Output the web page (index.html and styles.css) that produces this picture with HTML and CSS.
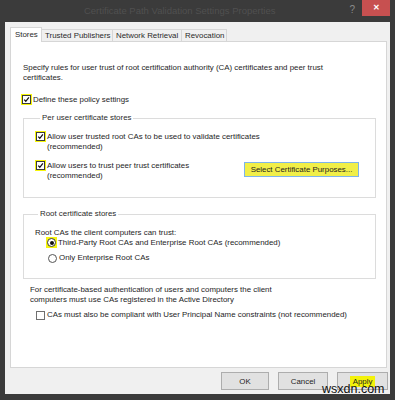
FILE: index.html
```html
<!DOCTYPE html>
<html lang="en">
<head>
    <meta charset="UTF-8">
    <meta name="viewport" content="width=device-width, initial-scale=1.0">
    <title>Certificate Path Validation Settings Properties</title>
    <link rel="stylesheet" href="styles.css">
</head>
<body>
    <div class="window">
        <div class="titlebar">
            <div class="title">Certificate Path Validation Settings Properties</div>
            <span class="help">?</span>
            <span class="close">&#x2715;</span>
        </div>
        <div class="dialog">
            <div class="tabs">
                <div class="tab active">Stores</div>
                <div class="tab w-trusted">Trusted Publishers</div>
                <div class="tab w-network">Network Retrieval</div>
                <div class="tab w-revocation">Revocation</div>
            </div>
            <div class="panel">
                <p class="intro">Specify rules for user trust of root certification authority (CA) certificates and peer trust certificates.</p>

                <div class="option define">
                    <span class="mark"><span class="box"><svg viewBox="0 0 9 9"><path d="M1.6 4.6 L3.6 6.8 L7.6 1.8" /></svg></span></span>
                    <span>Define these policy settings</span>
                </div>

                <fieldset class="group user-group">
                    <legend>Per user certificate stores</legend>
                    <div class="option">
                        <span class="mark"><span class="box"><svg viewBox="0 0 9 9"><path d="M1.6 4.6 L3.6 6.8 L7.6 1.8" /></svg></span></span>
                        <span>Allow user trusted root CAs to be used to validate certificates<br>(recommended)</span>
                    </div>
                    <div class="option peer">
                        <span class="mark"><span class="box"><svg viewBox="0 0 9 9"><path d="M1.6 4.6 L3.6 6.8 L7.6 1.8" /></svg></span></span>
                        <span>Allow users to trust peer trust certificates<br>(recommended)</span>
                        <button class="purposes">Select Certificate Purposes...</button>
                    </div>
                </fieldset>

                <fieldset class="group root-group">
                    <legend>Root certificate stores</legend>
                    <div class="root-label">Root CAs the client computers can trust:</div>
                    <div class="radios">
                        <div class="radio-row">
                            <span class="mark"><span class="radio checked"></span></span>
                            <span>Third-Party Root CAs and Enterprise Root CAs (recommended)</span>
                        </div>
                        <div class="radio-row">
                            <span class="radio plain"></span>
                            <span>Only Enterprise Root CAs</span>
                        </div>
                    </div>
                </fieldset>

                <p class="auth-note">For certificate-based authentication of users and computers the client computers must use CAs registered in the Active Directory</p>
                <div class="option upn">
                    <span class="box empty"></span>
                    <span>CAs must also be compliant with User Principal Name constraints (not recommended)</span>
                </div>
            </div>
            <div class="buttons">
                <button class="btn ok">OK</button>
                <button class="btn cancel">Cancel</button>
                <button class="btn apply"><span class="hl">Apply</span></button>
            </div>
        </div>
        <div class="watermark">wsxdn.com</div>
    </div>
</body>
</html>
```
FILE: styles.css
```css
body {
    margin: 0;
    padding: 0;
    background-color: #3b3b3b;
    font-family: 'Liberation Sans', Arial, sans-serif;
    font-size: 7.9px;
    color: #1e1e1e;
}
.window {
    position: relative;
    width: 395px;
    height: 400px;
    display: flex;
    flex-direction: column;
}
.titlebar {
    height: 22px;
    display: flex;
    align-items: flex-start;
    position: relative;
}
.title {
    flex: 1;
    text-align: center;
    font-size: 9.5px;
    line-height: 22px;
    color: #505050;
    padding-left: 10px;
}
.help {
    font-size: 10px;
    line-height: 20px;
    color: #8a8a8a;
    margin-right: 7px;
}
.close {
    width: 28px;
    height: 16px;
    background-color: #c75050;
    color: white;
    font-size: 8px;
    font-weight: bold;
    line-height: 16px;
    text-align: center;
    margin-right: 5px;
}
.dialog {
    flex: 1;
    margin: 0 5px 6px 5px;
    padding: 5px 3px 4px 5px;
    background-color: #f0f0f0;
    display: flex;
    flex-direction: column;
}
.tabs {
    display: flex;
    align-items: flex-end;
    height: 14px;
    position: relative;
    z-index: 1;
}
.tab {
    height: 12px;
    line-height: 11px;
    padding: 0 3px;
    border: 1px solid #d6d6d6;
    border-bottom: none;
    border-left: none;
    background-color: #f0f0f0;
    color: #2a2a2a;
    box-sizing: border-box;
    white-space: nowrap;
}
.tab.active {
    width: 32px;
    height: 15px;
    line-height: 14px;
    background-color: white;
    border-left: 1px solid #d6d6d6;
    margin-bottom: -1px;
    padding-left: 4px;
}
.w-trusted { width: 71px; }
.w-network { width: 69px; }
.w-revocation { width: 45px; }
.panel {
    flex: 1;
    background-color: white;
    border: 1px solid #d6d6d6;
    padding: 21px 10px 0 12px;
}
.intro {
    margin: 0;
    line-height: 10px;
    width: 310px;
}
.option {
    display: flex;
    align-items: flex-start;
    line-height: 10px;
}
.mark {
    background-color: #f6f50d;
    padding: 1px;
    margin: -1px 1px 0 -2px;
    display: flex;
}
.box {
    width: 7px;
    height: 7px;
    border: 1px solid #3a3a3a;
    background-color: white;
    display: flex;
}
.box svg {
    width: 7px;
    height: 7px;
}
.box path {
    fill: none;
    stroke: #111;
    stroke-width: 1.6;
}
.define {
    margin-top: 12px;
    align-items: center;
}
.group {
    margin: 8px 0 0 0;
    border: 1px solid #dcdcdc;
    padding: 0;
}
.group legend {
    padding: 0 2px;
    margin-left: 3px;
    line-height: 10px;
    color: #2a2a2a;
}
.user-group {
    padding: 9px 16px 16px 13px;
}
.user-group .option + .option {
    margin-top: 9px;
}
.purposes {
    margin-left: auto;
    margin-top: 1px;
    width: 115px;
    height: 15px;
    padding: 0;
    border: 1px solid #7eb4ea;
    background-color: #f1ef48;
    font-family: inherit;
    font-size: 7.9px;
    color: #1e1e1e;
}
.root-group {
    margin-top: 11px;
    padding: 9px 10px 15px 11px;
}
.root-label {
    line-height: 10px;
}
.radios {
    margin-left: 13px;
    display: flex;
    flex-direction: column;
    gap: 5px;
}
.radio-row {
    display: flex;
    align-items: center;
    line-height: 10px;
}
.radio {
    width: 7px;
    height: 7px;
    border: 1px solid #3a3a3a;
    border-radius: 50%;
    background-color: white;
    display: flex;
    align-items: center;
    justify-content: center;
}
.radio.checked::after {
    content: '';
    width: 4px;
    height: 4px;
    border-radius: 50%;
    background-color: #111;
}
.radio.plain {
    border-color: #555;
    margin-right: 2px;
}
.auth-note {
    margin: 6px 0 0 7px;
    line-height: 10px;
    width: 245px;
}
.upn {
    margin: 5px 0 0 13px;
    align-items: center;
}
.box.empty {
    border-color: #707070;
    margin-right: 2px;
}
.buttons {
    display: flex;
    justify-content: flex-end;
    gap: 9px;
    margin-top: 4px;
    margin-right: -1px;
}
.btn {
    height: 18px;
    padding: 0;
    border: 1px solid #adadad;
    background-color: #e1e1e1;
    font-family: inherit;
    font-size: 7.9px;
    color: #1e1e1e;
}
.ok { width: 48px; }
.cancel { width: 50px; }
.apply { width: 51px; }
.hl {
    background-color: #f3f20a;
    padding: 1px 3px;
}
.watermark {
    position: absolute;
    left: 322px;
    top: 382px;
    font-size: 12.5px;
    color: #111;
    font-family: 'Liberation Sans', Arial, sans-serif;
}
```
